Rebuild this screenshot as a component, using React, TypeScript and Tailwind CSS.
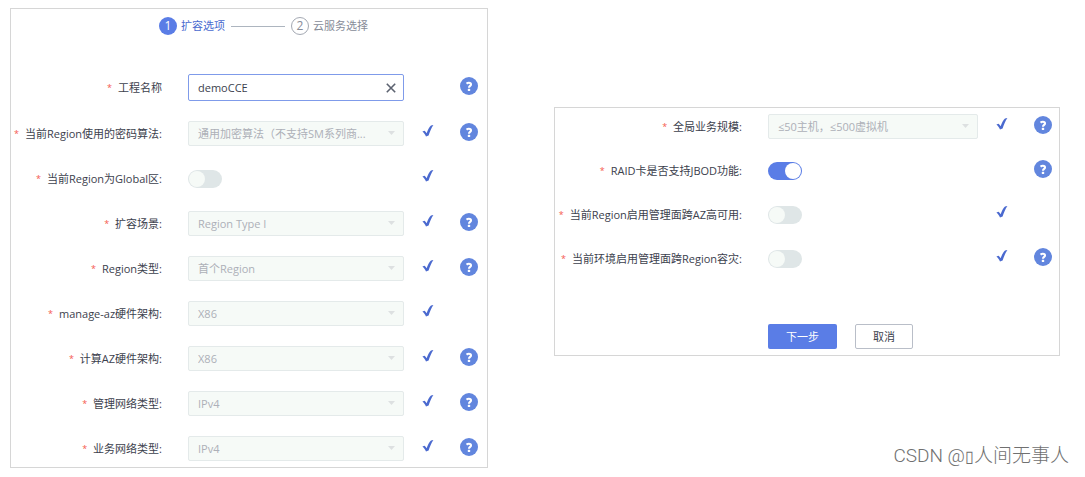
import { useState } from 'react'

interface Field {
  id: string
  label: string
  kind: 'text' | 'select' | 'switch'
  value?: string
  checked?: boolean
  valid?: boolean
  help?: boolean
}

const projectFields: Field[] = [
  { id: 'project-name', label: '工程名称', kind: 'text', value: 'demoCCE', help: true },
  { id: 'cipher', label: '当前Region使用的密码算法:', kind: 'select', value: '通用加密算法（不支持SM系列商...', valid: true, help: true },
  { id: 'global-region', label: '当前Region为Global区:', kind: 'switch', valid: true },
  { id: 'scene', label: '扩容场景:', kind: 'select', value: 'Region Type I', valid: true, help: true },
  { id: 'region-type', label: 'Region类型:', kind: 'select', value: '首个Region', valid: true, help: true },
  { id: 'manage-az', label: 'manage-az硬件架构:', kind: 'select', value: 'X86', valid: true },
  { id: 'compute-az', label: '计算AZ硬件架构:', kind: 'select', value: 'X86', valid: true, help: true },
  { id: 'manage-net', label: '管理网络类型:', kind: 'select', value: 'IPv4', valid: true, help: true },
  { id: 'service-net', label: '业务网络类型:', kind: 'select', value: 'IPv4', valid: true, help: true },
]

const scaleFields: Field[] = [
  { id: 'scale', label: '全局业务规模:', kind: 'select', value: '≤50主机，≤500虚拟机', valid: true, help: true },
  { id: 'jbod', label: 'RAID卡是否支持JBOD功能:', kind: 'switch', checked: true, help: true },
  { id: 'cross-az', label: '当前Region启用管理面跨AZ高可用:', kind: 'switch', valid: true },
  { id: 'cross-region', label: '当前环境启用管理面跨Region容灾:', kind: 'switch', valid: true, help: true },
]

function CheckIcon() {
  return (
    <svg className="w-3 h-3" viewBox="0 0 12 12" fill="#4a69cf" aria-hidden="true">
      <path d="M0.4 6.4 L2.6 5.7 C3.5 6.4 4.1 7.2 4.6 8.2 C5.9 4.8 7.4 1.9 9 0.5 L11.4 0 C9.4 3 7.8 6.6 6.6 10.6 L4 11.4 C3.1 9.4 1.9 7.6 0.4 6.4 Z" />
    </svg>
  )
}

function HelpIcon() {
  return (
    <svg className="w-[18px] h-[18px]" viewBox="0 0 18 18" aria-hidden="true">
      <circle cx="9" cy="9" r="9" fill="#6286de" />
      <path
        d="M6.5 6.6 C7.3 6 8.1 5.8 8.9 5.8 C10.3 5.8 11 6.4 11 7.4 C11 8.9 9 8.9 9 10.8"
        fill="none"
        stroke="#fff"
        strokeWidth="2.1"
      />
      <rect x="7.8" y="11.8" width="2.4" height="2.2" rx="0.6" fill="#fff" />
    </svg>
  )
}

function TextControl({ field }: { field: Field }) {
  const [value, setValue] = useState(field.value ?? '')

  return (
    <div className="relative">
      <input
        id={field.id}
        type="text"
        value={value}
        onChange={(e) => setValue(e.target.value)}
        className="block w-full h-[27px] pl-[9px] pr-7 border border-[#7f9bea] rounded-xs bg-white text-[#3c414d] outline-none"
      />
      <button
        type="button"
        aria-label="清除"
        onClick={() => setValue('')}
        className="absolute right-2 inset-y-0 flex items-center"
      >
        <svg className="w-[10px] h-[10px]" viewBox="0 0 10 10" fill="none" stroke="#5c6270" strokeWidth="1.6">
          <path d="M0.8 0.8 L9.2 9.2 M9.2 0.8 L0.8 9.2" />
        </svg>
      </button>
    </div>
  )
}

function SelectControl({ field }: { field: Field }) {
  return (
    <div className="relative">
      <select
        id={field.id}
        disabled
        className="block w-full h-[25px] pl-[9px] pr-7 appearance-none border border-[#e4eaea] rounded-xs bg-[#f6faf7] text-[#adb0b8] opacity-100"
      >
        <option>{field.value}</option>
      </select>
      <svg className="absolute right-[9px] top-[10px] w-[7px] h-1" viewBox="0 0 7 4" fill="#dde0e1" aria-hidden="true">
        <path d="M0 0 H7 L3.5 4 Z" />
      </svg>
    </div>
  )
}

function SwitchControl({ field }: { field: Field }) {
  const [on, setOn] = useState(field.checked ?? false)

  return (
    <input
      id={field.id}
      type="checkbox"
      role="switch"
      checked={on}
      onChange={(e) => setOn(e.target.checked)}
      className="block w-[34px] h-[18px] p-px appearance-none rounded-full bg-[#dfe6e7] checked:bg-[#5a7de6] before:block before:w-4 before:h-4 before:rounded-full before:bg-[#f6faf7] checked:before:bg-white checked:before:translate-x-4"
    />
  )
}

function FieldRow({ field, labelWidth }: { field: Field; labelWidth: string }) {
  return (
    <div className="flex items-center min-h-[25px]">
      <label htmlFor={field.id} className={`${labelWidth} shrink-0 flex justify-end gap-[6px] whitespace-nowrap text-[#3c414d]`}>
        <span className="text-[9px] text-[#f5594e]">*</span>
        {field.label}
      </label>
      <div className="flex-1 min-w-0 ml-[26px] mr-[18px]">
        {field.kind === 'text' && <TextControl field={field} />}
        {field.kind === 'select' && <SelectControl field={field} />}
        {field.kind === 'switch' && <SwitchControl field={field} />}
      </div>
      <div className="w-3 mr-[26px] pb-[5px]">{field.valid && <CheckIcon />}</div>
      <div className="w-[18px] pb-[3px]">
        {field.help && (
          <button type="button" aria-label="帮助" className="block">
            <HelpIcon />
          </button>
        )}
      </div>
    </div>
  )
}

function Stepper() {
  return (
    <ol className="flex items-center justify-center h-[18px] pl-[38px]">
      <li className="flex items-center gap-1 text-[#4a69cf]">
        <span className="flex items-center justify-center w-[18px] h-[18px] rounded-full bg-[#5a7de6] text-xs text-white">1</span>
        扩容选项
      </li>
      <li className="w-[54px] h-px mx-[6px] bg-[#adb5bf]" aria-hidden="true" />
      <li className="flex items-center gap-1 text-[#878c98]">
        <span className="flex items-center justify-center w-[18px] h-[18px] rounded-full border border-[#a4a9b3] text-xs">2</span>
        云服务选择
      </li>
    </ol>
  )
}

export default function App() {
  return (
    <main className="relative min-h-screen bg-white pt-2 pb-[9px] pl-[10px] pr-[25px] font-['Open_Sans','Noto_Sans_CJK_SC',sans-serif] text-[11px] leading-4">
      <div className="grid grid-cols-[478fr_506fr] gap-[66px] items-start">
        <section className="border border-[#d6d6d6] pt-2 pb-[6px] pr-[9px]">
          <Stepper />
          <div className="flex flex-col gap-5 mt-[39px]">
            {projectFields.map((field) => (
              <FieldRow key={field.id} field={field} labelWidth="w-[151px]" />
            ))}
          </div>
        </section>

        <section className="mt-[99px] border border-[#d6d6d6] pt-[6px] pb-[6px] pr-[7px]">
          <div className="flex flex-col gap-[19px]">
            {scaleFields.map((field) => (
              <FieldRow key={field.id} field={field} labelWidth="w-[187px]" />
            ))}
          </div>
          <div className="flex gap-[18px] mt-[53px] ml-[213px]">
            <button type="button" className="w-[69px] h-[25px] rounded-xs bg-[#5a7de6] text-white">
              下一步
            </button>
            <button type="button" className="w-[58px] h-[25px] rounded-xs border border-[#b9bec8] text-[#3c414d]">
              取消
            </button>
          </div>
        </section>
      </div>

      <p className="absolute right-4 bottom-2 font-['Roboto','Noto_Sans_CJK_SC',sans-serif] font-light text-[19px] leading-6 text-[#707070]">
        CSDN @<span className="text-base">▯</span>人间无事人
      </p>
    </main>
  )
}
